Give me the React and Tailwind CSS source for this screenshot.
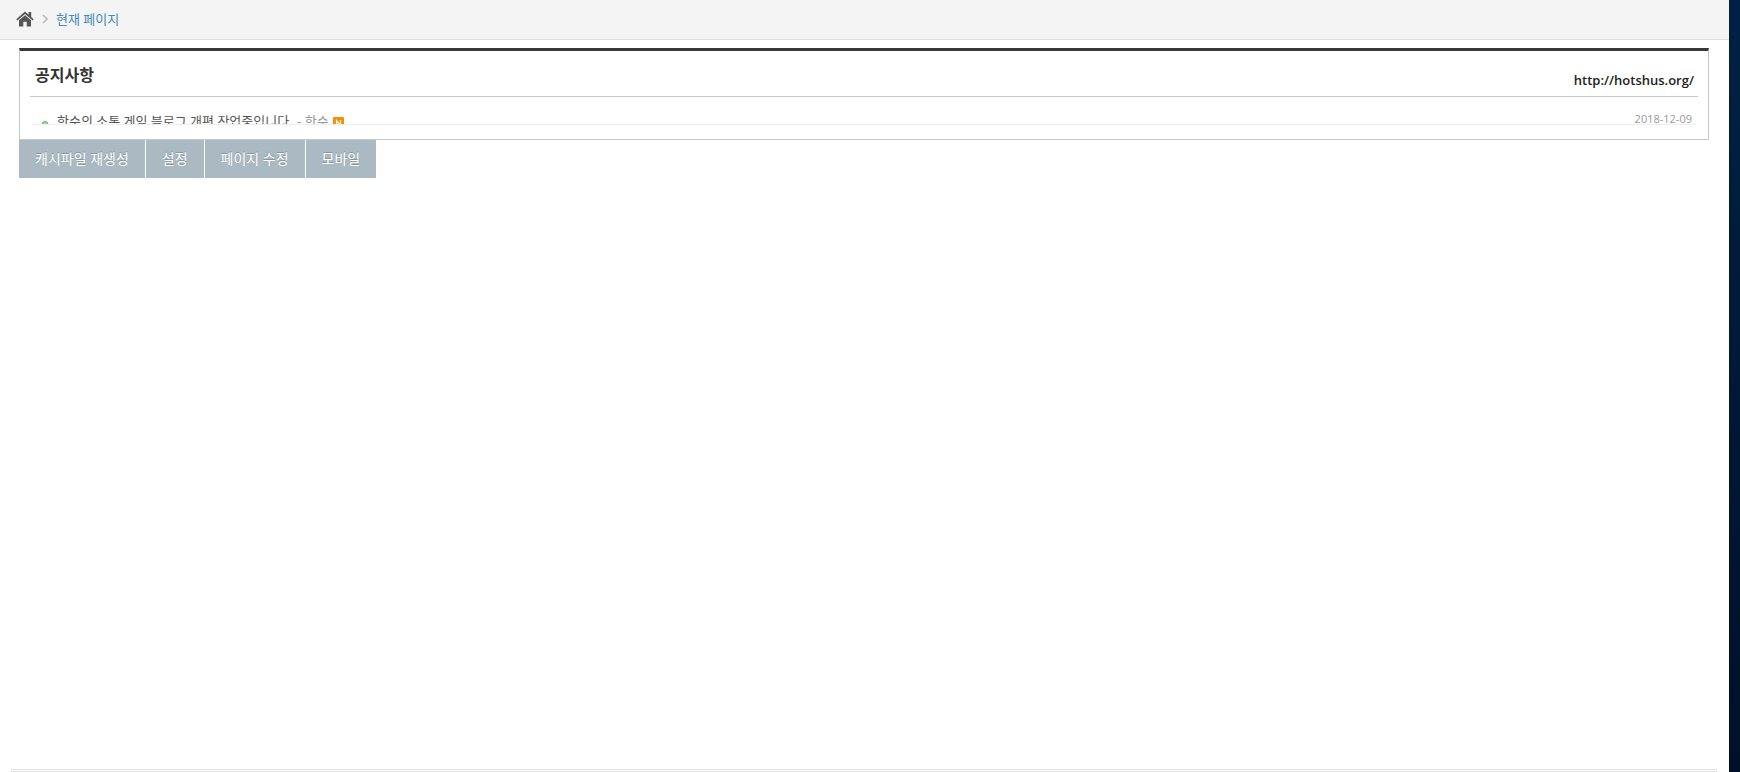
const notices = [
  { title: '한수의 소통 게임 블로그 개편 작업중입니다', author: '한수', date: '2018-12-09' },
];

const actions = ['캐시파일 재생성', '설정', '페이지 수정', '모바일'];

function HomeIcon() {
  return (
    <svg width="18" height="16" viewBox="0 0 18 16" fill="#555" aria-hidden="true">
      <path d="M9 0.6 L0.3 8.2 L1.4 9.4 L9 2.9 L16.6 9.4 L17.7 8.2 L15.2 6 V1 H12.6 V3.7 Z" />
      <path d="M9 4.2 L3 9.3 V15.4 H7.3 V10.8 H10.7 V15.4 H15 V9.3 Z" />
    </svg>
  );
}

function Breadcrumb() {
  return (
    <nav className="flex h-10 items-center border-b border-[#e1e1e1] bg-[#f4f4f4] pb-[2px] pl-4 text-[13px] leading-5">
      <a href="#home" aria-label="홈">
        <HomeIcon />
      </a>
      <svg className="ml-2 mr-2" width="6" height="10" viewBox="0 0 6 10" fill="none" stroke="#b9b9c0" strokeWidth="1.6" aria-hidden="true">
        <path d="M1 1 L5 5 L1 9" />
      </svg>
      <a href="#current" className="text-[#428bba]">
        현재 페이지
      </a>
    </nav>
  );
}

function NoticeRow({ title, author, date }) {
  return (
    <li className="flex h-4 items-start justify-between overflow-hidden border-b border-[#eee] pl-2 pr-1">
      <a href="#notice" className="flex items-start text-[13px] leading-6 text-[#555]">
        <svg className="mr-2 mt-3 shrink-0" width="9" height="8" viewBox="0 0 9 8" aria-hidden="true">
          <circle cx="5" cy="3.5" r="3" fill="#a5dba5" stroke="#5cb85c" />
        </svg>
        <span>{title}</span>
        <span className="ml-2 text-[#999]">- {author}</span>
        <svg className="ml-1 mt-2 shrink-0" width="11" height="11" viewBox="0 0 11 11" aria-label="새 글">
          <rect width="11" height="11" rx="1" fill="#ff8c00" />
          <path d="M3.5 9 V3.5 L7.5 8.5 V3" fill="none" stroke="#fff" strokeWidth="1.2" />
        </svg>
      </a>
      <time className="text-[11px] leading-5 text-[#999]">{date}</time>
    </li>
  );
}

export default function App() {
  return (
    <div className="flex min-h-screen bg-white font-['Open_Sans','Noto_Sans_CJK_KR',sans-serif]">
      <div className="flex min-w-0 flex-1 flex-col">
        <Breadcrumb />
        <main className="mt-2 flex-1 pl-[19px] pr-5">
          <section className="border border-t-[3px] border-[#c8c8c8] border-t-[#383838] px-[10px] pb-[14px]">
            <header className="flex h-[46px] items-center justify-between border-b border-[#c8c8c8] pl-[5px] pr-1">
              <h2 className="font-['Noto_Sans_CJK_KR',sans-serif] text-[16px] font-bold leading-6 text-[#333]">공지사항</h2>
              <a href="http://hotshus.org/" className="mt-3 text-[13px] font-semibold leading-5 text-[#222]">
                http://hotshus.org/
              </a>
            </header>
            <ul className="mx-[2px] mt-3">
              {notices.map((n) => (
                <NoticeRow key={n.title} {...n} />
              ))}
            </ul>
          </section>
          <div className="flex gap-px">
            {actions.map((label) => (
              <button
                key={label}
                type="button"
                className="h-[38px] bg-[#abb9c2] px-4 text-[14px] leading-5 text-white [text-shadow:0_-1px_0_#8696a1]"
              >
                {label}
              </button>
            ))}
          </div>
        </main>
        <footer className="ml-[11px] mr-3 h-[3px] border-y border-[#e1e1e1]" />
      </div>
      <aside className="w-[11px] bg-linear-to-b from-[#002145] to-[#001028]" />
    </div>
  );
}
